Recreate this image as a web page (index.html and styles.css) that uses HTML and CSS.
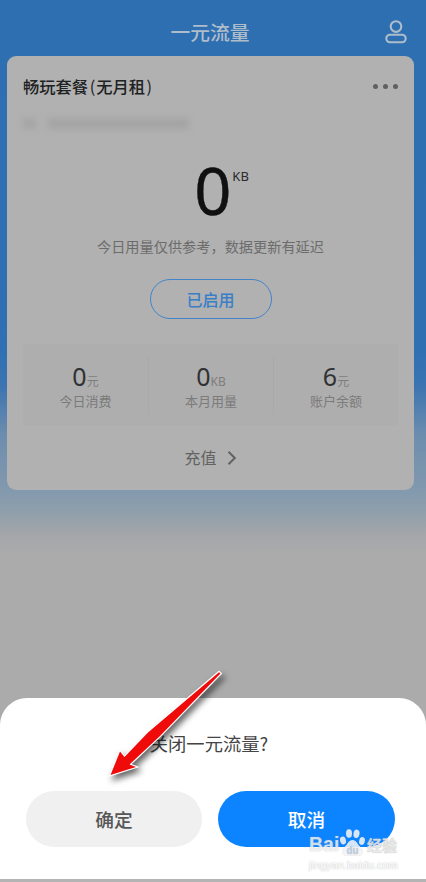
FILE: index.html
```html
<!DOCTYPE html>
<html lang="zh-CN">
<head>
<meta charset="utf-8">
<title>一元流量</title>
<link rel="stylesheet" href="styles.css">
</head>
<body>
<div class="screen">
  <header class="topbar">
    <h1>一元流量</h1>
    <svg class="user" width="24" height="26" viewBox="0 0 24 26" fill="none" stroke="currentColor" stroke-width="2.1"><circle cx="12" cy="7.6" r="5.3"/><rect x="2.3" y="15.7" width="19.400" height="7.6" rx="3.8"/></svg>
  </header>
  <main class="card">
    <div class="plan"><h2>畅玩套餐<b>(</b>无月租<b>)</b></h2><span class="more"><i></i><i></i><i></i></span></div>
    <div class="masked"><span class="mask-short"></span><span class="mask-long"></span></div>
    <div class="usage"><span class="amount">0</span><span class="unit">KB</span></div>
    <p class="note">今日用量仅供参考，数据更新有延迟</p>
    <button class="enabled">已启用</button>
    <section class="stats">
      <div class="stat"><p class="value">0<small>元</small></p><p class="label">今日消费</p></div>
      <div class="stat"><p class="value">0<small>KB</small></p><p class="label">本月用量</p></div>
      <div class="stat"><p class="value">6<small>元</small></p><p class="label">账户余额</p></div>
    </section>
    <div class="recharge"><span>充值</span><svg width="10" height="16" viewBox="0 0 10 16" fill="none" stroke="currentColor" stroke-width="2"><path d="M1.5 1.8 7.8 8 1.5 14.2"/></svg></div>
  </main>
  <section class="sheet">
    <p class="question">关闭一元流量?</p>
    <div class="actions"><button class="confirm">确定</button><button class="cancel">取消</button></div>
  </section>
  <svg class="arrow" width="130" height="120" viewBox="0 0 130 120"><path d="M10.500 106 20 82.500 24.500 88 48 63.500 119 3.200 120.500 4.500 60 67 29.500 95.500 36 98Z"/></svg>
  <div class="watermark">
    <div class="brand"><span class="bai">Bai</span><svg width="27" height="29" viewBox="0 0 27 29"><ellipse cx="4" cy="12.500" rx="2.900" ry="3.900" transform="rotate(-15 4 12.500)"/><ellipse cx="10" cy="5.500" rx="3" ry="4.200"/><ellipse cx="17.500" cy="5.800" rx="3" ry="4.200" transform="rotate(10 17.500 5.800)"/><ellipse cx="23" cy="13" rx="2.800" ry="3.900" transform="rotate(15 23 13)"/><path d="M13.500 12C9.500 12 9 16 6 18.500 1 22.500 3 28 7.500 28 10 28 11 27.500 13.500 27.500S17 28 19.500 28C24 28 26 22.500 21 18.500 18 16 17.500 12 13.500 12Z"/><text x="7.500" y="25.500" class="du">du</text></svg><span class="jy">经验</span></div>
    <div class="url">jingyan.baidu.com</div>
  </div>
</div>
</body>
</html>
```
FILE: styles.css
```css
* { box-sizing: border-box; }
body { margin: 0; font-family: "Noto Sans", "Noto Sans CJK SC", sans-serif; }
h1, h2, p { margin: 0; font-weight: 400; }
button { font: inherit; padding: 0; border: 0; }

.screen {
  position: relative;
  display: flex;
  flex-direction: column;
  width: 426px;
  height: 882px;
  overflow: hidden;
  background: linear-gradient(#2e6fb1 0, #2f70b3 350px, #3b74b1 385px, #6d8dae 435px, #8299ae 490px, #92a0ab 515px, #a4a6a9 535px, #ababab 555px);
}
.topbar {
  display: grid;
  grid-template-columns: 1fr auto 1fr;
  align-items: center;
  height: 56px;
  padding: 8px 18px 0 0;
  color: #afbdcb;
}
.topbar h1 { grid-column: 2; font: 500 19.8px/28px "Noto Sans CJK SC", sans-serif; margin-left: 12px; }
.user { justify-self: end; }

.card {
  display: flex;
  flex-direction: column;
  width: 407px;
  height: 434px;
  margin-left: 7px;
  padding: 18px 16px 0;
  border-radius: 9px;
  background: #b1b1b1;
}
.plan { display: flex; justify-content: space-between; align-items: center; height: 24px; }
.plan h2 { font: 500 16.3px/24px "Noto Sans CJK SC", sans-serif; color: #202122; }
.plan b { font-weight: 400; margin: 0 1px 0 1.5px; }
.more { display: flex; gap: 5px; }
.more i { width: 5px; height: 5px; border-radius: 50%; background: #606060; }
.masked { display: flex; gap: 12px; height: 11px; margin-top: 20px; filter: blur(3px); }
.mask-short { width: 13px; background: #a5a5a5; }
.mask-long { width: 141px; background: #a4a4a4; }
.usage { display: flex; justify-content: center; height: 80px; margin: 21px 0 0 22px; }
.amount { font-size: 65px; line-height: 80px; color: #101010; -webkit-text-stroke: .4px #101010; }
.unit { font-size: 13px; line-height: 18px; margin: 17px 0 0 1px; color: #2b2b2b; }
.note { margin-top: 4px; text-align: center; font: 14.2px/24px "Noto Sans CJK SC", sans-serif; color: #6c6c6c; }
.enabled {
  align-self: center;
  width: 122px;
  height: 40px;
  margin-top: 21px;
  border: 1.5px solid #4384c9;
  border-radius: 20px;
  background: none;
  color: #397fc8;
  font: 500 16px/37px "Noto Sans CJK SC", sans-serif;
}
.stats { display: grid; grid-template-columns: repeat(3, 1fr); height: 82px; margin-top: 25px; padding: 12px 0; background: #aeaeae; }
.stat { text-align: center; height: 58px; padding-top: 4px; }
.stat + .stat { border-left: 1px solid #a9a9a9; }
.value { height: 32px; font-size: 25px; line-height: 32px; color: #303234; }
.value small { font-size: 12px; color: #7d7d7d; }
.label { font: 13px/18px "Noto Sans CJK SC", sans-serif; color: #7b7b7b; }
.recharge { display: flex; justify-content: center; align-items: center; gap: 10px; height: 24px; margin-top: 20px; color: #626262; font-size: 16px; line-height: 24px; }

.sheet {
  height: 181px;
  margin-top: 208px;
  padding-top: 31px;
  border-radius: 27px 27px 0 0;
  background: #fff;
  box-shadow: 0 3px #b4b4b4;
}
.question { width: 418px; text-align: center; font: 18.3px/28px "Noto Sans CJK SC", sans-serif; color: #444; }
.actions { display: flex; gap: 16px; margin: 34px 0 0 26px; }
.actions button { width: 176px; height: 56px; border-radius: 28px; font: 500 18.7px/54px "Noto Sans CJK SC", sans-serif; }
.actions .confirm { background: #f0f0f0; color: #575757; }
.actions .cancel { width: 177px; background: #0d84ff; color: #fff; }

.arrow { position: absolute; left: 100px; top: 669px; overflow: visible; filter: drop-shadow(3px 4px 3px #0009); }
.arrow path { fill: #f00b0b; stroke: #fff; stroke-width: 2.4; paint-order: stroke; }

.watermark { position: absolute; left: 309px; top: 828px; width: 96px; font-family: "Liberation Sans", sans-serif; }
.brand { display: flex; align-items: flex-end; height: 29px; color: #ffffffb8; text-shadow: 0 0 1.5px #9999; }
.brand svg { flex: none; fill: #ffffffc9; filter: drop-shadow(0 0 .7px #8888); }
.du { font: 700 10px "Liberation Sans", sans-serif; fill: #bdd0e4; }
.bai { width: 30px; font-weight: 700; font-size: 19.5px; line-height: 25px; }
.jy { font: 500 15px/24px "Noto Sans CJK SC", sans-serif; white-space: nowrap; margin-left: 1px; -webkit-text-stroke: .5px #d8d8d8; }
.url { margin-top: 2px; font-size: 11px; line-height: 13px; letter-spacing: 0; color: #fff; text-shadow: 0 0 1.5px #aaa; }
```
